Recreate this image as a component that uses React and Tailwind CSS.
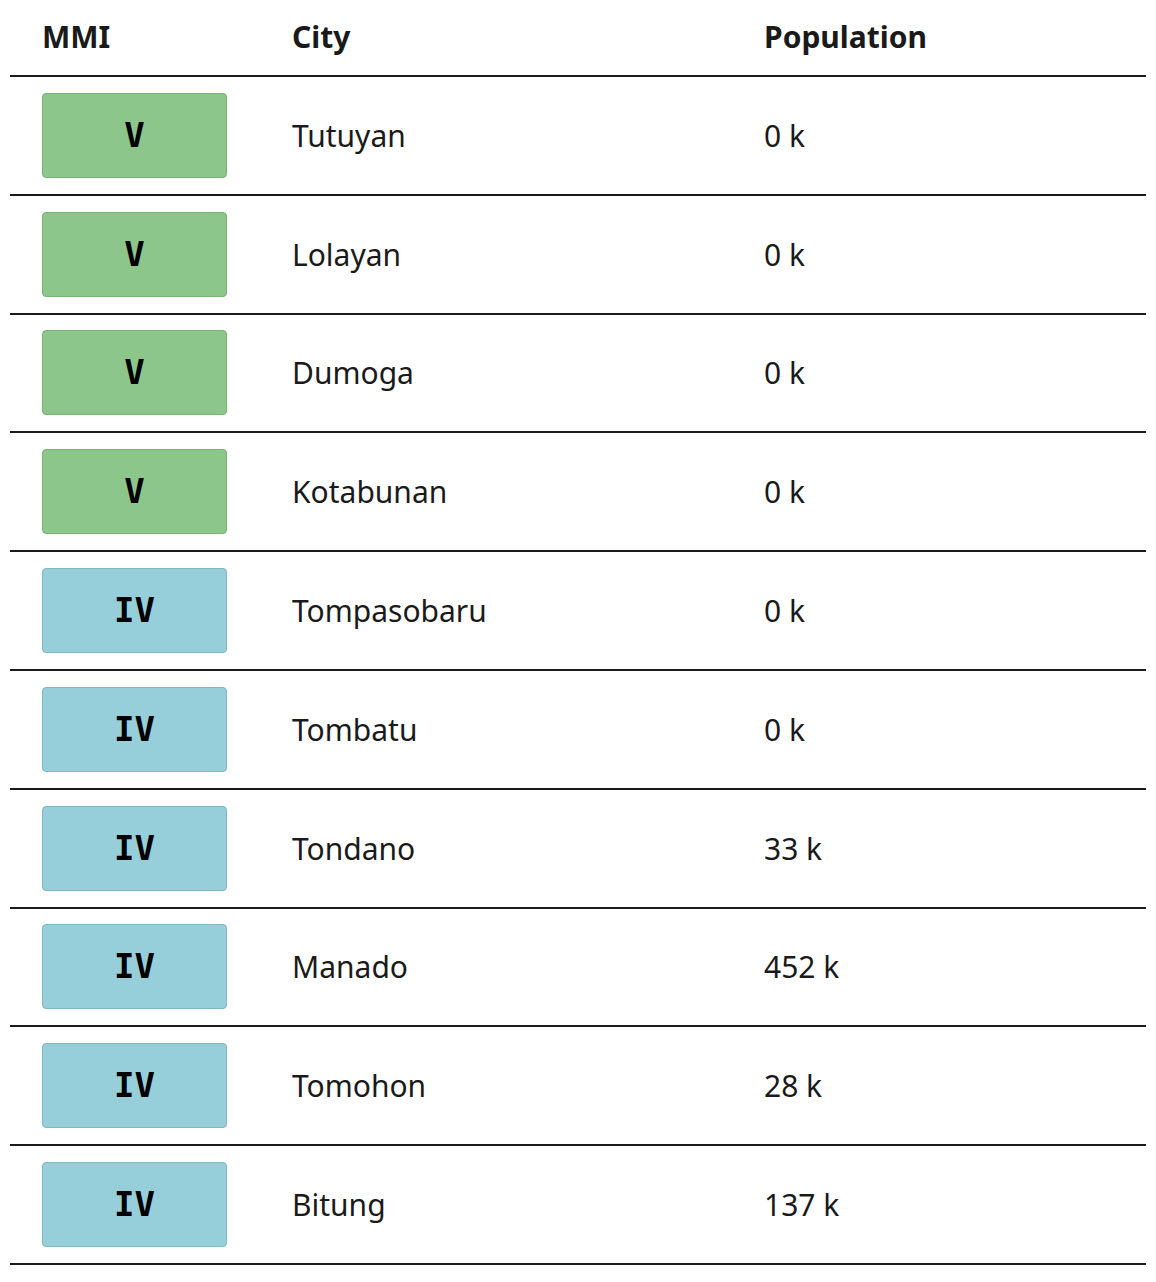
const rows = [
  { mmi: "V", city: "Tutuyan", pop: "0 k" },
  { mmi: "V", city: "Lolayan", pop: "0 k" },
  { mmi: "V", city: "Dumoga", pop: "0 k" },
  { mmi: "V", city: "Kotabunan", pop: "0 k" },
  { mmi: "IV", city: "Tompasobaru", pop: "0 k" },
  { mmi: "IV", city: "Tombatu", pop: "0 k" },
  { mmi: "IV", city: "Tondano", pop: "33 k" },
  { mmi: "IV", city: "Manado", pop: "452 k" },
  { mmi: "IV", city: "Tomohon", pop: "28 k" },
  { mmi: "IV", city: "Bitung", pop: "137 k" },
];

function Badge({ mmi }) {
  const cls =
    mmi === "V"
      ? "bg-[#8dc68a] border-[#7aaf78]"
      : "bg-[#96cfd9] border-[#82b6c0]";
  return (
    <div
      className={`w-[185px] h-[85px] rounded-[4px] border flex items-center justify-center text-[34px] font-bold text-black ${cls}`}
      style={{ fontFamily: '"DejaVu Sans Mono", monospace' }}
    >
      {mmi}
    </div>
  );
}

export default function App() {
  return (
    <div
      className="bg-white w-[1156px] min-h-[1282px] text-[#1a1a1a]"
      style={{ fontFamily: '"Noto Sans", "Open Sans", sans-serif' }}
    >
      <div className="mx-[10px]">
        <div className="grid grid-cols-[250px_472px_1fr] h-[77px] items-center border-b-2 border-[#1a1a1a] font-bold text-[30px] pb-[2px]">
          <div className="pl-[32px]">MMI</div>
          <div className="pl-[32px]">City</div>
          <div className="pl-[32px]">Population</div>
        </div>
        {rows.map((r, i) => (
          <div
            key={i}
            className="grid grid-cols-[250px_472px_1fr] h-[118.8px] items-center border-b-2 border-[#1a1a1a] text-[30px]"
          >
            <div className="pl-[32px]">
              <Badge mmi={r.mmi} />
            </div>
            <div className="pl-[32px]">{r.city}</div>
            <div className="pl-[32px]">{r.pop}</div>
          </div>
        ))}
      </div>
    </div>
  );
}
